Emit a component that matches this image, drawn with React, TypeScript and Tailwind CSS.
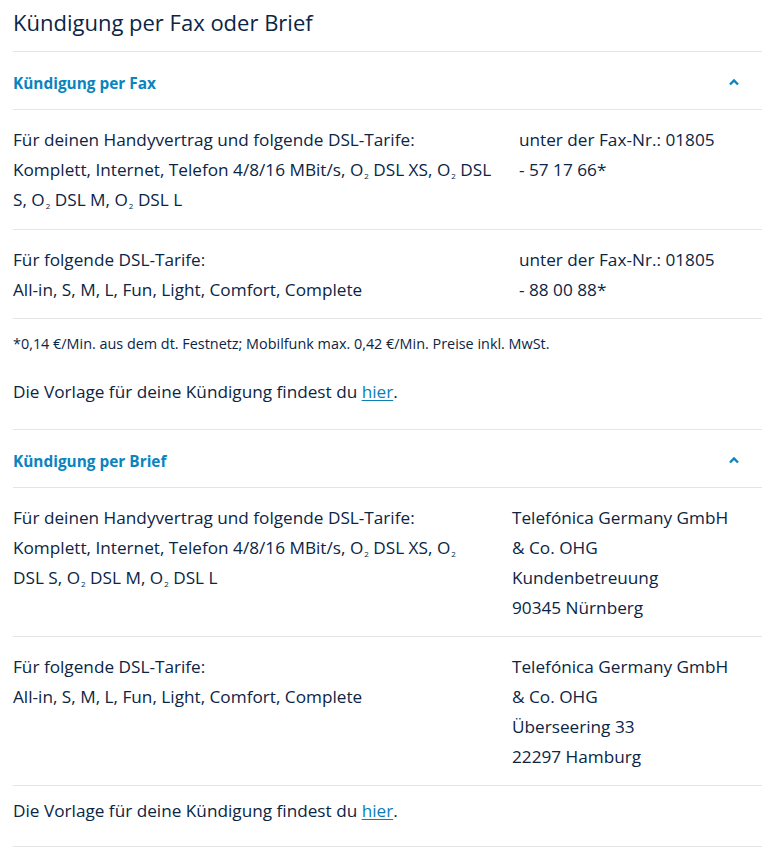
import React from "react";

const O2 = () => (
  <>
    O<span className="relative top-[3px] text-[8px] leading-none ml-[1px]">2</span>
  </>
);

function SectionHeader({ title }: { title: string }) {
  return (
    <div className="flex items-center justify-between h-[58px] pt-[6px] border-b border-[#e3e5e8]">
      <span className="font-bold text-[15.4px] text-[#0a84bd]">{title}</span>
      <svg width="12" height="8" viewBox="0 0 12 8" className="mr-[22px] mb-[4px]">
        <polyline points="2,6.5 6,2.5 10,6.5" fill="none" stroke="#0a84bd" strokeWidth="2.4" />
      </svg>
    </div>
  );
}

function Row({
  left,
  right,
  leftW,
  pb,
}: {
  left: React.ReactNode;
  right: React.ReactNode;
  leftW: string;
  pb: string;
}) {
  return (
    <div className={`flex pt-[15px] ${pb} border-b border-[#e3e5e8] leading-[30px]`}>
      <div className={leftW}>{left}</div>
      <div className="flex-1">{right}</div>
    </div>
  );
}

function Vorlage() {
  return (
    <p className="leading-[30px]">
      Die Vorlage für deine Kündigung findest du{" "}
      <a href="#" className="text-[#0a7fb5] underline underline-offset-2">
        hier
      </a>
      .
    </p>
  );
}

export default function App() {
  return (
    <div className="bg-white min-h-screen px-[13px] pr-[8px] text-[17.2px] text-[#0b2545] font-['Open_Sans',sans-serif]">
      {/* Title */}
      <h1 className="h-[52px] pt-[5px] text-[22px] leading-[34px] text-[#0b2545] border-b border-[#e3e5e8]">
        Kündigung per Fax oder Brief
      </h1>

      {/* Fax */}
      <SectionHeader title="Kündigung per Fax" />
      <Row
        pb="pb-[14px]"
        leftW="w-[506px] pr-[20px]"
        left={
          <>
            Für deinen Handyvertrag und folgende DSL-Tarife:
            <br />
            Komplett, Internet, Telefon 4/8/16 MBit/s, <O2 /> DSL XS, <O2 /> DSL S, <O2 /> DSL M, <O2 /> DSL L
          </>
        }
        right={
          <>
            unter der Fax-Nr.: 01805
            <br />- 57 17 66*
          </>
        }
      />
      <Row
        pb="pb-[13px]"
        leftW="w-[506px] pr-[20px]"
        left={
          <>
            Für folgende DSL-Tarife:
            <br />
            All-in, S, M, L, Fun, Light, Comfort, Complete
          </>
        }
        right={
          <>
            unter der Fax-Nr.: 01805
            <br />- 88 00 88*
          </>
        }
      />
      <div className="pt-[15px] pb-[22px] border-b border-[#e3e5e8]">
        <p className="text-[14.4px] leading-[20px] mb-[23px]">
          *0,14 €/Min. aus dem dt. Festnetz; Mobilfunk max. 0,42 €/Min. Preise inkl. MwSt.
        </p>
        <Vorlage />
      </div>

      {/* Brief */}
      <SectionHeader title="Kündigung per Brief" />
      <Row
        pb="pb-[13px]"
        leftW="w-[499px] pr-[30px]"
        left={
          <>
            Für deinen Handyvertrag und folgende DSL-Tarife:
            <br />
            Komplett, Internet, Telefon 4/8/16 MBit/s, <O2 /> DSL XS, <O2 /> DSL S, <O2 /> DSL M, <O2 /> DSL L
          </>
        }
        right={
          <>
            Telefónica Germany GmbH
            <br />& Co. OHG
            <br />
            Kundenbetreuung
            <br />
            90345 Nürnberg
          </>
        }
      />
      <Row
        pb="pb-[13px]"
        leftW="w-[499px] pr-[30px]"
        left={
          <>
            Für folgende DSL-Tarife:
            <br />
            All-in, S, M, L, Fun, Light, Comfort, Complete
          </>
        }
        right={
          <>
            Telefónica Germany GmbH
            <br />& Co. OHG
            <br />
            Überseering 33
            <br />
            22297 Hamburg
          </>
        }
      />
      <div className="pt-[10px] pb-[20px] border-b border-[#e3e5e8]">
        <Vorlage />
      </div>
    </div>
  );
}
